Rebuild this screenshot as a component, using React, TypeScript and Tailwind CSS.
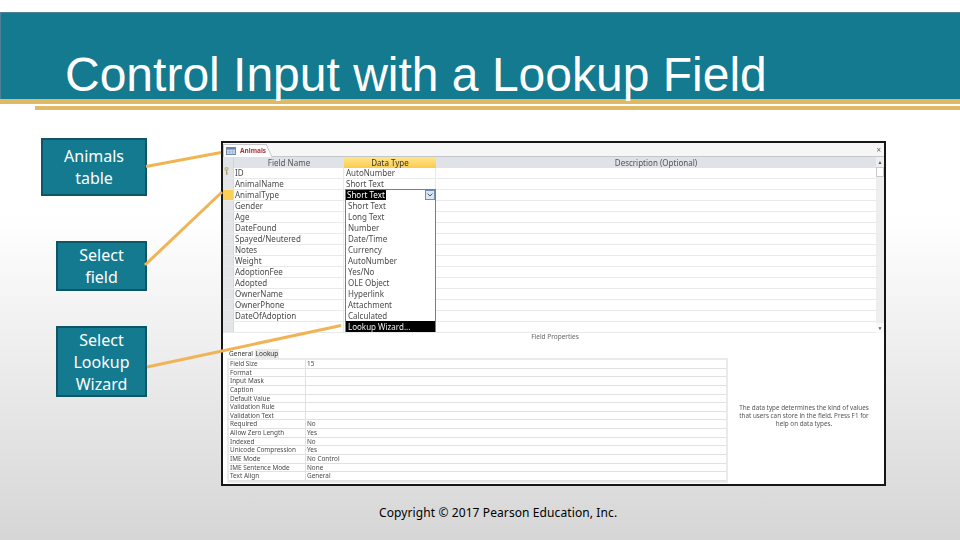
const fieldNames = [
  'ID',
  'AnimalName',
  'AnimalType',
  'Gender',
  'Age',
  'DateFound',
  'Spayed/Neutered',
  'Notes',
  'Weight',
  'AdoptionFee',
  'Adopted',
  'OwnerName',
  'OwnerPhone',
  'DateOfAdoption',
  '',
]

const dataTypes = ['AutoNumber', 'Short Text']

const menuItems = [
  'Short Text',
  'Long Text',
  'Number',
  'Date/Time',
  'Currency',
  'AutoNumber',
  'Yes/No',
  'OLE Object',
  'Hyperlink',
  'Attachment',
  'Calculated',
]

const properties = [
  ['Field Size', '15'],
  ['Format', ''],
  ['Input Mask', ''],
  ['Caption', ''],
  ['Default Value', ''],
  ['Validation Rule', ''],
  ['Validation Text', ''],
  ['Required', 'No'],
  ['Allow Zero Length', 'Yes'],
  ['Indexed', 'No'],
  ['Unicode Compression', 'Yes'],
  ['IME Mode', 'No Control'],
  ['IME Sentence Mode', 'None'],
  ['Text Align', 'General'],
]

function Callout({ lines, className }: { lines: string[]; className: string }) {
  return (
    <div
      className={`flex flex-col items-center justify-center border-2 border-[#0e5566] bg-[#147a90] text-[16px] leading-[22px] text-white font-['Noto_Sans',sans-serif] ${className}`}
    >
      {lines.map((line) => (
        <span key={line}>{line}</span>
      ))}
    </div>
  )
}

function TableIcon() {
  return (
    <svg width="10" height="8" viewBox="0 0 10 8" className="shrink-0">
      <rect x="0.5" y="0.5" width="9" height="7" fill="#dfe7f2" stroke="#6f88a8" />
      <rect x="1" y="1" width="8" height="1.6" fill="#5f83b5" />
      <path d="M1 4.2H9M1 5.9H9M3.8 2.6V7.5M6.6 2.6V7.5" stroke="#8fa6c4" strokeWidth="0.6" />
    </svg>
  )
}

function KeyIcon() {
  return (
    <svg width="5" height="8" viewBox="0 0 5 8" className="-mt-[4px] -ml-[3px]">
      <circle cx="2.5" cy="2" r="1.7" fill="#d9cf8a" stroke="#a39a5c" strokeWidth="0.6" />
      <path d="M2.5 3.5V7.6M2.5 5.8H3.9M2.5 7.2H3.7" stroke="#a39a5c" strokeWidth="0.9" />
    </svg>
  )
}

function Designer() {
  return (
    <div className="relative mt-[31px] flex h-[345px] w-[665px] shrink-0 flex-col border-2 border-[#161616] bg-white text-[8px] text-[#4a4a4a] blur-[0.4px] font-['Noto_Sans',sans-serif]">
      <div className="flex h-[14px] shrink-0 items-end border-b border-[#c4c6c9] bg-[#f6f6f6]">
        <div className="relative -mb-px flex h-[13px] w-[43px] items-center gap-[4px] border-t border-l border-[#c4c6c9] bg-white pl-[2px]">
          <TableIcon />
          <span className="text-[6.5px] font-bold text-[#a4373a]">Animals</span>
        </div>
        <svg width="6" height="13" viewBox="0 0 6 13" className="-mb-px">
          <path d="M0 0L6 13H0Z" fill="#fff" />
          <path d="M0 0L6 13" stroke="#c4c6c9" fill="none" />
        </svg>
        <span className="ml-auto mr-[3px] self-center text-[8px] leading-none text-[#666]">×</span>
      </div>

      <div className="flex shrink-0">
        <div className="flex-1">
          <div className="flex h-[11px] bg-[#dfe2e6] leading-[11px] text-[#555]">
            <div className="w-[11px] border-r border-[#cfd2d6]" />
            <div className="w-[110px] text-center">Field Name</div>
            <div className="w-[92px] bg-gradient-to-b from-[#fde68a] to-[#fbcb4c] text-center text-[#333]">Data Type</div>
            <div className="flex-1 text-center">Description (Optional)</div>
          </div>
          {fieldNames.map((name, i) => (
            <div key={i} className="flex h-[11px] border-b border-[#e7e9eb] leading-[10px]">
              <div
                className={`flex w-[11px] shrink-0 items-center justify-center border-r border-[#d5d7da] ${
                  i === 2 ? 'bg-[#fbcf55]' : 'bg-[#e3e5e8]'
                }`}
              >
                {i === 0 && <KeyIcon />}
              </div>
              <div className="w-[110px] shrink-0 border-r border-[#e7e9eb] pl-[1px]">{name}</div>
              <div className="w-[92px] shrink-0 border-r border-[#e7e9eb] pl-[2px]">{dataTypes[i] ?? ''}</div>
              <div className="flex-1" />
            </div>
          ))}
        </div>
        <div className="flex w-[8px] shrink-0 flex-col bg-[#eceef0]">
          <div className="flex h-[10px] items-center justify-center text-[5px] leading-none text-[#555]">▲</div>
          <div className="h-[10px] border border-[#c8cacc] bg-white" />
          <div className="mt-auto flex h-[10px] items-center justify-center bg-[#fafafa] text-[5px] leading-none text-[#555]">▼</div>
        </div>
      </div>

      <div className="-mt-px shrink-0 pl-[3px] text-center text-[6.5px] leading-[10px] text-[#666]">Field Properties</div>

      <div className="flex flex-1">
        <div className="ml-[4px] mt-[5px] w-[501px] shrink-0">
          <div className="flex h-[11px] items-end pl-[2px] text-[6.5px] leading-[9px] text-[#333]">
            <div className="w-[26px]">General</div>
            <div className="w-[24px] bg-[#e8e8e8] text-center">Lookup</div>
          </div>
          <div className="border-[2px] border-[#eaeaea]">
            {properties.map(([label, value]) => (
              <div key={label} className="flex h-[8.65px] border-b border-[#dfe1e3] text-[6.4px] leading-[8px]">
                <div className="w-[77px] shrink-0 border-r border-[#dfe1e3] pl-[1px]">{label}</div>
                <div className="pl-[1px]">{value}</div>
              </div>
            ))}
          </div>
        </div>
        <div className="flex flex-1 items-center justify-center pl-[4px] pr-[8px] pt-[6px]">
          <p className="w-[136px] text-center text-[6.3px] leading-[8px] text-[#555]">
            The data type determines the kind of values that users can store in the field. Press F1 for help on data types.
          </p>
        </div>
      </div>

      {/* open combo on the AnimalType row */}
      <div className="absolute left-[122px] top-[46px] flex h-[143px] w-[91px] flex-col border border-[#7d7d7d] bg-white leading-[11px] text-[#4a4a4a]">
        <div className="flex h-[10px] shrink-0 items-center">
          <span className="bg-black px-[1px] leading-[10px] text-white">Short Text</span>
          <span className="ml-auto flex h-[10px] w-[10px] items-center justify-center border border-[#6f8fb5] bg-[#dbe6f3]">
            <svg width="6" height="4" viewBox="0 0 6 4">
              <path d="M0.5 0.5L3 3L5.5 0.5" stroke="#3b5a80" fill="none" />
            </svg>
          </span>
        </div>
        {menuItems.map((item) => (
          <div key={item} className="h-[11px] pl-[2px]">
            {item}
          </div>
        ))}
        <div className="h-[11px] bg-black pl-[2px] text-[#eee]">Lookup Wizard...</div>
      </div>
    </div>
  )
}

export default function App() {
  return (
    <div className="relative h-[540px] w-[960px] overflow-hidden bg-gradient-to-b from-white from-40% to-[#d6d6d6]">
      <div className="relative mt-[12px] h-[87px] whitespace-nowrap border-t border-l border-[#4f8296] bg-[#147a90] pl-[64px] pt-[37px] text-[48px] leading-[50px] text-white font-['Liberation_Sans',Arial,sans-serif]">
        Control Input with a Lookup Field
      </div>
      <div className="h-[5px] bg-[#dfb964]" />
      <div className="ml-[35px] mt-[2px] h-[4px] bg-[#dfb964]" />

      <div className="flex">
        <div className="ml-[41px] flex w-[180px] shrink-0 flex-col">
          <Callout lines={['Animals', 'table']} className="mt-[28px] h-[58px] w-[106px]" />
          <Callout lines={['Select', 'field']} className="ml-[15px] mt-[45px] h-[50px] w-[91px]" />
          <Callout lines={['Select', 'Lookup', 'Wizard']} className="ml-[15px] mt-[35px] h-[71px] w-[91px]" />
        </div>
        <Designer />
      </div>

      <div className="ml-[379px] mt-[18px] whitespace-nowrap text-[12px] leading-[18px] tracking-[0.1px] text-black font-['Noto_Sans',sans-serif]">
        Copyright © 2017 Pearson Education, Inc.
      </div>

      {/* leader lines sit on top of everything */}
      <svg width="960" height="540" className="absolute left-0 top-0">
        <g stroke="#f0b355" strokeWidth="3" fill="none">
          <path d="M146 166.5L221 152.5" />
          <path d="M145 265L222 192" />
          <path d="M147 367L341 325.5" />
        </g>
      </svg>
    </div>
  )
}
